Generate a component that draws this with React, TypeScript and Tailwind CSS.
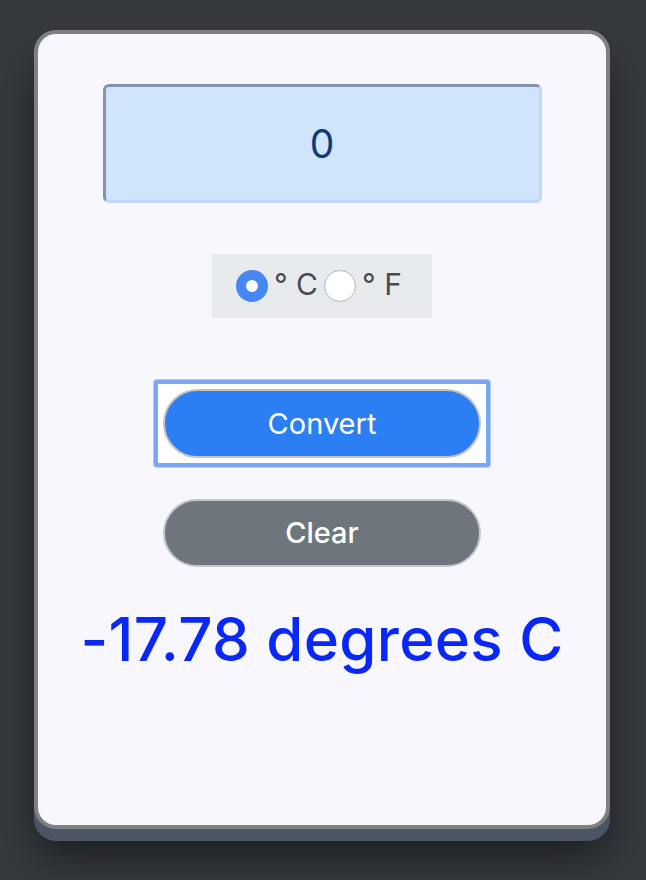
import { useState } from 'react';

export default function App() {
  const [value, setValue] = useState('0');
  const [unit, setUnit] = useState<'C' | 'F'>('C');

  return (
    <div className="min-h-screen bg-[#363a3f] pt-[30px] pl-[34px] font-['Inter',sans-serif]">
      <div className="flex h-[799px] w-[576px] flex-col items-center rounded-[22px] border-4 border-[#808080] bg-[#f9f7fe] pt-[50px] shadow-[0_12px_0_#4b5563,0_30px_40px_rgba(0,0,0,0.45)]">
        <input
          value={value}
          onChange={(e) => setValue(e.target.value)}
          className="h-[119px] w-[439px] rounded-[6px] border-[3px] border-t-[#8395ae] border-l-[#8395ae] border-r-[#bcd8fb] border-b-[#bcd8fb] bg-[#d0e4fb] text-center text-[39px] text-[#0d3b7c] outline-none"
        />

        <div className="mt-[51px] flex h-[64px] w-[220px] items-center gap-[6px] bg-[#e8ebee] pl-[24px] text-[30px] leading-none text-[#4a4c50]">
          <button
            onClick={() => setUnit('C')}
            className={
              unit === 'C'
                ? 'flex h-8 w-8 items-center justify-center rounded-full bg-[#4587f3]'
                : 'h-8 w-8 rounded-full border border-[#b5b5b5] bg-white'
            }
          >
            {unit === 'C' && <span className="h-3 w-3 rounded-full bg-white" />}
          </button>
          <span className="-mt-1">° C</span>
          <button
            onClick={() => setUnit('F')}
            className={
              unit === 'F'
                ? 'flex h-8 w-8 items-center justify-center rounded-full bg-[#4587f3]'
                : 'h-8 w-8 rounded-full border border-[#b5b5b5] bg-white'
            }
          >
            {unit === 'F' && <span className="h-3 w-3 rounded-full bg-white" />}
          </button>
          <span className="-mt-1">° F</span>
        </div>

        <div className="mt-[62px] rounded-[3px] border-4 border-[#7aa7f5] bg-white p-[5px] shadow-[0_0_0_1px_#b3cdf9]">
          <button className="h-[69px] w-[318px] rounded-full border-2 border-[#c4c4c4] bg-[#2b7ff3] text-[29px] text-white">
            Convert
          </button>
        </div>

        <button
          onClick={() => setValue('')}
          className="mt-[32px] h-[68px] w-[318px] rounded-full border-2 border-[#c4c4c4] bg-[#6f757c] text-[29px] font-medium text-white"
        >
          Clear
        </button>

        <div className="mt-[36px] text-[60px] leading-[72px] font-medium tracking-[0.3px] text-[#0a28f5]">
          -17.78 degrees C
        </div>
      </div>
    </div>
  );
}
